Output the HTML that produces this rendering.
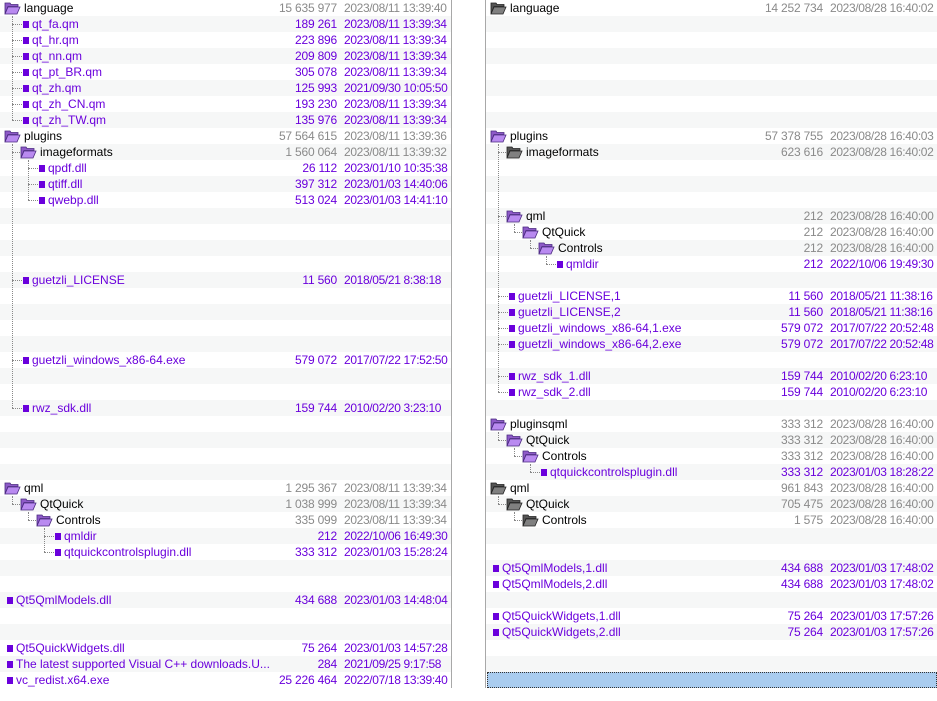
<!DOCTYPE html>
<html><head><meta charset="utf-8"><style>
*{margin:0;padding:0;box-sizing:border-box}
body{width:937px;height:701px;background:#fff;position:relative;overflow:hidden;font-family:"Liberation Sans",sans-serif;font-size:12px}
.p{position:absolute;top:0;width:451px;height:688px;background:repeating-linear-gradient(#fff 0 16px,#f6f7f7 16px 32px)}
#L{left:0;border-right:1px solid #a8a8a8;width:452px}
#R{left:485px;border-left:1px solid #a8a8a8;width:452px}
.r{position:absolute;left:0;width:451px;height:16px;line-height:16px;white-space:nowrap}
.n{position:absolute;top:0}
.s{position:absolute;right:114px;top:0;letter-spacing:-0.2px}
.d{position:absolute;left:344px;top:0;letter-spacing:-0.35px}
.u{color:#6a00dc}
.g .s,.g .d{color:#8a8a8a}
.sq{position:absolute;top:5px;width:6px;height:7px;background:#6a00dc}
.fo{position:absolute;top:2px;width:17px;height:13px}
.v{position:absolute;width:0;border-left:1px dotted #888}
.h{position:absolute;height:0;border-top:1px dotted #888}
.sel{position:absolute;left:1px;top:672px;width:450px;height:16px;background:#a9ccef;border:1px dotted #333}
</style></head><body>
<svg width="0" height="0" style="position:absolute"><defs>
<symbol id="fp" viewBox="0 0 17 13"><path d="M1 1h5l1 1.5h7v2H4L1 12z" fill="#8e5ac8" stroke="#4a2a80" stroke-width=".8"/><path d="M4 5h12l-3 7H1z" fill="#b98af0" stroke="#4a2a80" stroke-width=".8"/></symbol>
<symbol id="fg" viewBox="0 0 17 13"><path d="M1 1h5l1 1.5h7v2H4L1 12z" fill="#555" stroke="#222" stroke-width=".8"/><path d="M4 5h12l-3 7H1z" fill="#808080" stroke="#222" stroke-width=".8"/></symbol>
</defs></svg>

<div class="p" id="L">
<div class="v" style="left:12px;top:16px;height:104px"></div>
<div class="v" style="left:12px;top:144px;height:264px"></div>
<div class="v" style="left:28px;top:160px;height:40px"></div>
<div class="v" style="left:12px;top:496px;height:8px"></div>
<div class="v" style="left:28px;top:512px;height:8px"></div>
<div class="v" style="left:44px;top:528px;height:24px"></div>

<div class="r g" style="top:0"><svg class="fo" style="left:4px"><use href="#fp"/></svg><span class="n" style="left:24px">language</span><span class="s">15 635 977</span><span class="d">2023/08/11 13:39:40</span></div>
<div class="r u" style="top:16px"><div class="h" style="left:12px;top:8px;width:10px"></div><i class="sq" style="left:23px"></i><span class="n" style="left:32px">qt_fa.qm</span><span class="s">189 261</span><span class="d">2023/08/11 13:39:34</span></div>
<div class="r u" style="top:32px"><div class="h" style="left:12px;top:8px;width:10px"></div><i class="sq" style="left:23px"></i><span class="n" style="left:32px">qt_hr.qm</span><span class="s">223 896</span><span class="d">2023/08/11 13:39:34</span></div>
<div class="r u" style="top:48px"><div class="h" style="left:12px;top:8px;width:10px"></div><i class="sq" style="left:23px"></i><span class="n" style="left:32px">qt_nn.qm</span><span class="s">209 809</span><span class="d">2023/08/11 13:39:34</span></div>
<div class="r u" style="top:64px"><div class="h" style="left:12px;top:8px;width:10px"></div><i class="sq" style="left:23px"></i><span class="n" style="left:32px">qt_pt_BR.qm</span><span class="s">305 078</span><span class="d">2023/08/11 13:39:34</span></div>
<div class="r u" style="top:80px"><div class="h" style="left:12px;top:8px;width:10px"></div><i class="sq" style="left:23px"></i><span class="n" style="left:32px">qt_zh.qm</span><span class="s">125 993</span><span class="d">2021/09/30 10:05:50</span></div>
<div class="r u" style="top:96px"><div class="h" style="left:12px;top:8px;width:10px"></div><i class="sq" style="left:23px"></i><span class="n" style="left:32px">qt_zh_CN.qm</span><span class="s">193 230</span><span class="d">2023/08/11 13:39:34</span></div>
<div class="r u" style="top:112px"><div class="h" style="left:12px;top:8px;width:10px"></div><i class="sq" style="left:23px"></i><span class="n" style="left:32px">qt_zh_TW.qm</span><span class="s">135 976</span><span class="d">2023/08/11 13:39:34</span></div>
<div class="r g" style="top:128px"><svg class="fo" style="left:4px"><use href="#fp"/></svg><span class="n" style="left:24px">plugins</span><span class="s">57 564 615</span><span class="d">2023/08/11 13:39:36</span></div>
<div class="r g" style="top:144px"><div class="h" style="left:12px;top:8px;width:8px"></div><svg class="fo" style="left:20px"><use href="#fp"/></svg><span class="n" style="left:40px">imageformats</span><span class="s">1 560 064</span><span class="d">2023/08/11 13:39:32</span></div>
<div class="r u" style="top:160px"><div class="h" style="left:28px;top:8px;width:10px"></div><i class="sq" style="left:39px"></i><span class="n" style="left:48px">qpdf.dll</span><span class="s">26 112</span><span class="d">2023/01/10 10:35:38</span></div>
<div class="r u" style="top:176px"><div class="h" style="left:28px;top:8px;width:10px"></div><i class="sq" style="left:39px"></i><span class="n" style="left:48px">qtiff.dll</span><span class="s">397 312</span><span class="d">2023/01/03 14:40:06</span></div>
<div class="r u" style="top:192px"><div class="h" style="left:28px;top:8px;width:10px"></div><i class="sq" style="left:39px"></i><span class="n" style="left:48px">qwebp.dll</span><span class="s">513 024</span><span class="d">2023/01/03 14:41:10</span></div>
<div class="r u" style="top:272px"><div class="h" style="left:12px;top:8px;width:10px"></div><i class="sq" style="left:23px"></i><span class="n" style="left:32px">guetzli_LICENSE</span><span class="s">11 560</span><span class="d">2018/05/21 8:38:18</span></div>
<div class="r u" style="top:352px"><div class="h" style="left:12px;top:8px;width:10px"></div><i class="sq" style="left:23px"></i><span class="n" style="left:32px">guetzli_windows_x86-64.exe</span><span class="s">579 072</span><span class="d">2017/07/22 17:52:50</span></div>
<div class="r u" style="top:400px"><div class="h" style="left:12px;top:8px;width:10px"></div><i class="sq" style="left:23px"></i><span class="n" style="left:32px">rwz_sdk.dll</span><span class="s">159 744</span><span class="d">2010/02/20 3:23:10</span></div>
<div class="r g" style="top:480px"><svg class="fo" style="left:4px"><use href="#fp"/></svg><span class="n" style="left:24px">qml</span><span class="s">1 295 367</span><span class="d">2023/08/11 13:39:34</span></div>
<div class="r g" style="top:496px"><div class="h" style="left:12px;top:8px;width:8px"></div><svg class="fo" style="left:20px"><use href="#fp"/></svg><span class="n" style="left:40px">QtQuick</span><span class="s">1 038 999</span><span class="d">2023/08/11 13:39:34</span></div>
<div class="r g" style="top:512px"><div class="h" style="left:28px;top:8px;width:8px"></div><svg class="fo" style="left:36px"><use href="#fp"/></svg><span class="n" style="left:56px">Controls</span><span class="s">335 099</span><span class="d">2023/08/11 13:39:34</span></div>
<div class="r u" style="top:528px"><div class="h" style="left:44px;top:8px;width:10px"></div><i class="sq" style="left:55px"></i><span class="n" style="left:64px">qmldir</span><span class="s">212</span><span class="d">2022/10/06 16:49:30</span></div>
<div class="r u" style="top:544px"><div class="h" style="left:44px;top:8px;width:10px"></div><i class="sq" style="left:55px"></i><span class="n" style="left:64px">qtquickcontrolsplugin.dll</span><span class="s">333 312</span><span class="d">2023/01/03 15:28:24</span></div>
<div class="r u" style="top:592px"><i class="sq" style="left:7px"></i><span class="n" style="left:16px">Qt5QmlModels.dll</span><span class="s">434 688</span><span class="d">2023/01/03 14:48:04</span></div>
<div class="r u" style="top:640px"><i class="sq" style="left:7px"></i><span class="n" style="left:16px">Qt5QuickWidgets.dll</span><span class="s">75 264</span><span class="d">2023/01/03 14:57:28</span></div>
<div class="r u" style="top:656px"><i class="sq" style="left:7px"></i><span class="n" style="left:16px">The latest supported Visual C++ downloads.U...</span><span class="s">284</span><span class="d">2021/09/25 9:17:58</span></div>
<div class="r u" style="top:672px"><i class="sq" style="left:7px"></i><span class="n" style="left:16px">vc_redist.x64.exe</span><span class="s">25 226 464</span><span class="d">2022/07/18 13:39:40</span></div>
</div>

<div class="p" id="R">
<div class="sel"></div>
<div class="v" style="left:12px;top:144px;height:248px"></div>
<div class="v" style="left:28px;top:224px;height:8px"></div>
<div class="v" style="left:44px;top:240px;height:8px"></div>
<div class="v" style="left:60px;top:256px;height:8px"></div>
<div class="v" style="left:12px;top:432px;height:8px"></div>
<div class="v" style="left:28px;top:448px;height:8px"></div>
<div class="v" style="left:44px;top:464px;height:8px"></div>
<div class="v" style="left:12px;top:496px;height:8px"></div>
<div class="v" style="left:28px;top:512px;height:8px"></div>

<div class="r g" style="top:0"><svg class="fo" style="left:4px"><use href="#fg"/></svg><span class="n" style="left:24px">language</span><span class="s">14 252 734</span><span class="d">2023/08/28 16:40:02</span></div>
<div class="r g" style="top:128px"><svg class="fo" style="left:4px"><use href="#fp"/></svg><span class="n" style="left:24px">plugins</span><span class="s">57 378 755</span><span class="d">2023/08/28 16:40:03</span></div>
<div class="r g" style="top:144px"><div class="h" style="left:12px;top:8px;width:8px"></div><svg class="fo" style="left:20px"><use href="#fg"/></svg><span class="n" style="left:40px">imageformats</span><span class="s">623 616</span><span class="d">2023/08/28 16:40:02</span></div>
<div class="r g" style="top:208px"><div class="h" style="left:12px;top:8px;width:8px"></div><svg class="fo" style="left:20px"><use href="#fp"/></svg><span class="n" style="left:40px">qml</span><span class="s">212</span><span class="d">2023/08/28 16:40:00</span></div>
<div class="r g" style="top:224px"><div class="h" style="left:28px;top:8px;width:8px"></div><svg class="fo" style="left:36px"><use href="#fp"/></svg><span class="n" style="left:56px">QtQuick</span><span class="s">212</span><span class="d">2023/08/28 16:40:00</span></div>
<div class="r g" style="top:240px"><div class="h" style="left:44px;top:8px;width:8px"></div><svg class="fo" style="left:52px"><use href="#fp"/></svg><span class="n" style="left:72px">Controls</span><span class="s">212</span><span class="d">2023/08/28 16:40:00</span></div>
<div class="r u" style="top:256px"><div class="h" style="left:60px;top:8px;width:10px"></div><i class="sq" style="left:71px"></i><span class="n" style="left:80px">qmldir</span><span class="s">212</span><span class="d">2022/10/06 19:49:30</span></div>
<div class="r u" style="top:288px"><div class="h" style="left:12px;top:8px;width:10px"></div><i class="sq" style="left:23px"></i><span class="n" style="left:32px">guetzli_LICENSE,1</span><span class="s">11 560</span><span class="d">2018/05/21 11:38:16</span></div>
<div class="r u" style="top:304px"><div class="h" style="left:12px;top:8px;width:10px"></div><i class="sq" style="left:23px"></i><span class="n" style="left:32px">guetzli_LICENSE,2</span><span class="s">11 560</span><span class="d">2018/05/21 11:38:16</span></div>
<div class="r u" style="top:320px"><div class="h" style="left:12px;top:8px;width:10px"></div><i class="sq" style="left:23px"></i><span class="n" style="left:32px">guetzli_windows_x86-64,1.exe</span><span class="s">579 072</span><span class="d">2017/07/22 20:52:48</span></div>
<div class="r u" style="top:336px"><div class="h" style="left:12px;top:8px;width:10px"></div><i class="sq" style="left:23px"></i><span class="n" style="left:32px">guetzli_windows_x86-64,2.exe</span><span class="s">579 072</span><span class="d">2017/07/22 20:52:48</span></div>
<div class="r u" style="top:368px"><div class="h" style="left:12px;top:8px;width:10px"></div><i class="sq" style="left:23px"></i><span class="n" style="left:32px">rwz_sdk_1.dll</span><span class="s">159 744</span><span class="d">2010/02/20 6:23:10</span></div>
<div class="r u" style="top:384px"><div class="h" style="left:12px;top:8px;width:10px"></div><i class="sq" style="left:23px"></i><span class="n" style="left:32px">rwz_sdk_2.dll</span><span class="s">159 744</span><span class="d">2010/02/20 6:23:10</span></div>
<div class="r g" style="top:416px"><svg class="fo" style="left:4px"><use href="#fp"/></svg><span class="n" style="left:24px">pluginsqml</span><span class="s">333 312</span><span class="d">2023/08/28 16:40:00</span></div>
<div class="r g" style="top:432px"><div class="h" style="left:12px;top:8px;width:8px"></div><svg class="fo" style="left:20px"><use href="#fp"/></svg><span class="n" style="left:40px">QtQuick</span><span class="s">333 312</span><span class="d">2023/08/28 16:40:00</span></div>
<div class="r g" style="top:448px"><div class="h" style="left:28px;top:8px;width:8px"></div><svg class="fo" style="left:36px"><use href="#fp"/></svg><span class="n" style="left:56px">Controls</span><span class="s">333 312</span><span class="d">2023/08/28 16:40:00</span></div>
<div class="r u" style="top:464px"><div class="h" style="left:44px;top:8px;width:10px"></div><i class="sq" style="left:55px"></i><span class="n" style="left:64px">qtquickcontrolsplugin.dll</span><span class="s">333 312</span><span class="d">2023/01/03 18:28:22</span></div>
<div class="r g" style="top:480px"><svg class="fo" style="left:4px"><use href="#fg"/></svg><span class="n" style="left:24px">qml</span><span class="s">961 843</span><span class="d">2023/08/28 16:40:00</span></div>
<div class="r g" style="top:496px"><div class="h" style="left:12px;top:8px;width:8px"></div><svg class="fo" style="left:20px"><use href="#fg"/></svg><span class="n" style="left:40px">QtQuick</span><span class="s">705 475</span><span class="d">2023/08/28 16:40:00</span></div>
<div class="r g" style="top:512px"><div class="h" style="left:28px;top:8px;width:8px"></div><svg class="fo" style="left:36px"><use href="#fg"/></svg><span class="n" style="left:56px">Controls</span><span class="s">1 575</span><span class="d">2023/08/28 16:40:00</span></div>
<div class="r u" style="top:560px"><i class="sq" style="left:7px"></i><span class="n" style="left:16px">Qt5QmlModels,1.dll</span><span class="s">434 688</span><span class="d">2023/01/03 17:48:02</span></div>
<div class="r u" style="top:576px"><i class="sq" style="left:7px"></i><span class="n" style="left:16px">Qt5QmlModels,2.dll</span><span class="s">434 688</span><span class="d">2023/01/03 17:48:02</span></div>
<div class="r u" style="top:608px"><i class="sq" style="left:7px"></i><span class="n" style="left:16px">Qt5QuickWidgets,1.dll</span><span class="s">75 264</span><span class="d">2023/01/03 17:57:26</span></div>
<div class="r u" style="top:624px"><i class="sq" style="left:7px"></i><span class="n" style="left:16px">Qt5QuickWidgets,2.dll</span><span class="s">75 264</span><span class="d">2023/01/03 17:57:26</span></div>
</div>
</body></html>
